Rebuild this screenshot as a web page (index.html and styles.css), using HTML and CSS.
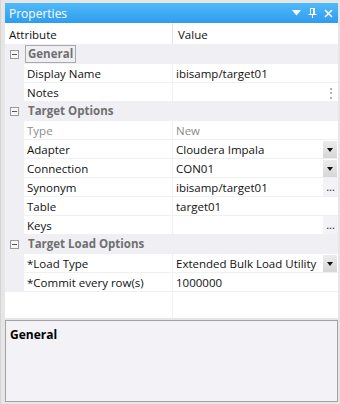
FILE: index.html
```html
<!doctype html>
<html>
<head>
   <title>Properties</title>
   <meta charset="utf-8">
   <link rel="stylesheet" href="styles.css">
</head>
<body>

   <div class="window">

      <div class="titlebar">
         <span class="title">Properties</span>
         <span class="tools">
            <svg width="9" height="6" viewBox="0 0 9 6"><path d="M0 0H9L4.5 5.5Z" fill="#fff"/></svg>
            <svg width="9" height="10" viewBox="0 0 9 10"><path d="M2 0.5H7M2.5 0.5V6M6.5 0.5V6M5.5 0.5V6M0.5 6.5H8.5M4.5 6.5V10" stroke="#fff" fill="none"/></svg>
            <svg width="9" height="9" viewBox="0 0 9 9"><path d="M1 1L8 8M8 1L1 8" stroke="#fff" stroke-width="1.6"/></svg>
         </span>
      </div>

      <div class="grid">
         <div class="head">
            <div class="hcell attr">Attribute</div>
            <div class="hcell val">Value</div>
         </div>

         <div class="row cat">
            <span class="toggle"></span>
            <span class="cat-name focus">General</span>
         </div>
         <div class="row">
            <div class="name">Display Name</div>
            <div class="value">ibisamp/target01</div>
         </div>
         <div class="row">
            <div class="name">Notes</div>
            <div class="value"><span class="text"></span><span class="vdots">&#8942;</span></div>
         </div>

         <div class="row cat">
            <span class="toggle"></span>
            <span class="cat-name">Target Options</span>
         </div>
         <div class="row off">
            <div class="name">Type</div>
            <div class="value">New</div>
         </div>
         <div class="row">
            <div class="name">Adapter</div>
            <div class="value"><span class="text">Cloudera Impala</span><span class="drop"></span></div>
         </div>
         <div class="row">
            <div class="name">Connection</div>
            <div class="value"><span class="text">CON01</span><span class="drop"></span></div>
         </div>
         <div class="row">
            <div class="name">Synonym</div>
            <div class="value"><span class="text">ibisamp/target01</span><span class="more">...</span></div>
         </div>
         <div class="row">
            <div class="name">Table</div>
            <div class="value">target01</div>
         </div>
         <div class="row">
            <div class="name">Keys</div>
            <div class="value"><span class="text"></span><span class="more">...</span></div>
         </div>

         <div class="row cat">
            <span class="toggle"></span>
            <span class="cat-name">Target Load Options</span>
         </div>
         <div class="row">
            <div class="name">*Load Type</div>
            <div class="value"><span class="text">Extended Bulk Load Utility</span><span class="drop"></span></div>
         </div>
         <div class="row">
            <div class="name">*Commit every row(s)</div>
            <div class="value">1000000</div>
         </div>

         <div class="filler">
            <div class="fill-left"></div>
            <div class="fill-right"></div>
         </div>
      </div>

      <div class="desc"><b>General</b></div>

   </div>

</body>
</html>
```

FILE: styles.css
```css
body{
   margin: 0;
   font-family: "Open Sans", "Noto Sans", sans-serif;
   font-size: 11.5px;
   color: #111;
   background: #e6e6e6;
}

.window{
   width: 340px;
   height: 404px;
   box-sizing: border-box;
   padding: 3px 2px 0 4px;
   border-left: 1px solid #d4d4d4;
   display: flex;
   flex-direction: column;
}

.titlebar{
   height: 20px;
   box-sizing: border-box;
   flex: none;
   display: flex;
   align-items: center;
   justify-content: space-between;
   padding: 0 5px 0 4px;
   background: linear-gradient(#4fbafa, #2f9cef);
   color: #fff;
   font-size: 12px;
}

.tools{
   display: flex;
   align-items: center;
   gap: 7px;
}

.tools svg{
   display: block;
}

.grid{
   background: #f0eff4;
   display: flex;
   flex-direction: column;
   gap: 1px;
}

.head{
   height: 21px;
   display: flex;
   background: #fff;
}

.hcell{
   display: flex;
   align-items: center;
   padding-top: 1px;
}

.hcell.attr{
   width: 163px;
   padding-left: 4px;
   border-right: 1px solid #e4e4e4;
}

.hcell.val{
   flex: 1;
   padding-left: 5px;
}

.row{
   height: 18px;
   display: flex;
   padding-left: 19px;
   gap: 1px;
}

.row.cat{
   padding-left: 5px;
   align-items: center;
   gap: 3px;
}

.toggle{
   width: 7px;
   height: 7px;
   border: 1px solid #9a9a9a;
   background: #f7f7f7;
   position: relative;
   margin-right: 3px;
}

.toggle::after{
   content: "";
   position: absolute;
   left: 1px;
   right: 1px;
   top: 3px;
   height: 1px;
   background: #555;
}

.cat-name{
   font-weight: bold;
   color: #6f6f6f;
   padding: 0 2px;
   line-height: 16px;
   border: 1px solid transparent;
}

.cat-name.focus{
   border-color: #a9a9a9;
}

.name,
.value{
   background: #fff;
   display: flex;
   align-items: center;
   white-space: nowrap;
   overflow: hidden;
}

.name{
   width: 145px;
   padding-left: 3px;
}

.value{
   flex: 1;
   min-width: 0;
   padding-left: 3px;
}

.off .name,
.off .value{
   color: #8c8c8c;
}

.value .text{
   flex: 1;
   min-width: 0;
   overflow: hidden;
}

.drop{
   flex: none;
   width: 14px;
   height: 17px;
   margin-right: 1px;
   background: linear-gradient(#ececec, #d6d6d6);
   position: relative;
}

.drop::after{
   content: "";
   position: absolute;
   left: 4px;
   top: 7px;
   border-left: 3px solid transparent;
   border-right: 3px solid transparent;
   border-top: 4px solid #111;
}

.more{
   flex: none;
   width: 15px;
   height: 18px;
   background: #f3f2f6;
   text-align: center;
   line-height: 17px;
   font-size: 11px;
   color: #222;
}

.vdots{
   width: 14px;
   color: #888;
   text-align: center;
}

.filler{
   height: 26px;
   display: flex;
   gap: 1px;
}

.fill-left{
   width: 167px;
   background: #fff;
}

.fill-right{
   flex: 1;
   background: #fff;
}

.desc{
   margin-top: 2px;
   height: 82px;
   box-sizing: border-box;
   border: 1px solid #a3a3a3;
   background: #f3f2f6;
   padding: 5px 4px;
   color: #000;
   font-size: 12px;
}
```
